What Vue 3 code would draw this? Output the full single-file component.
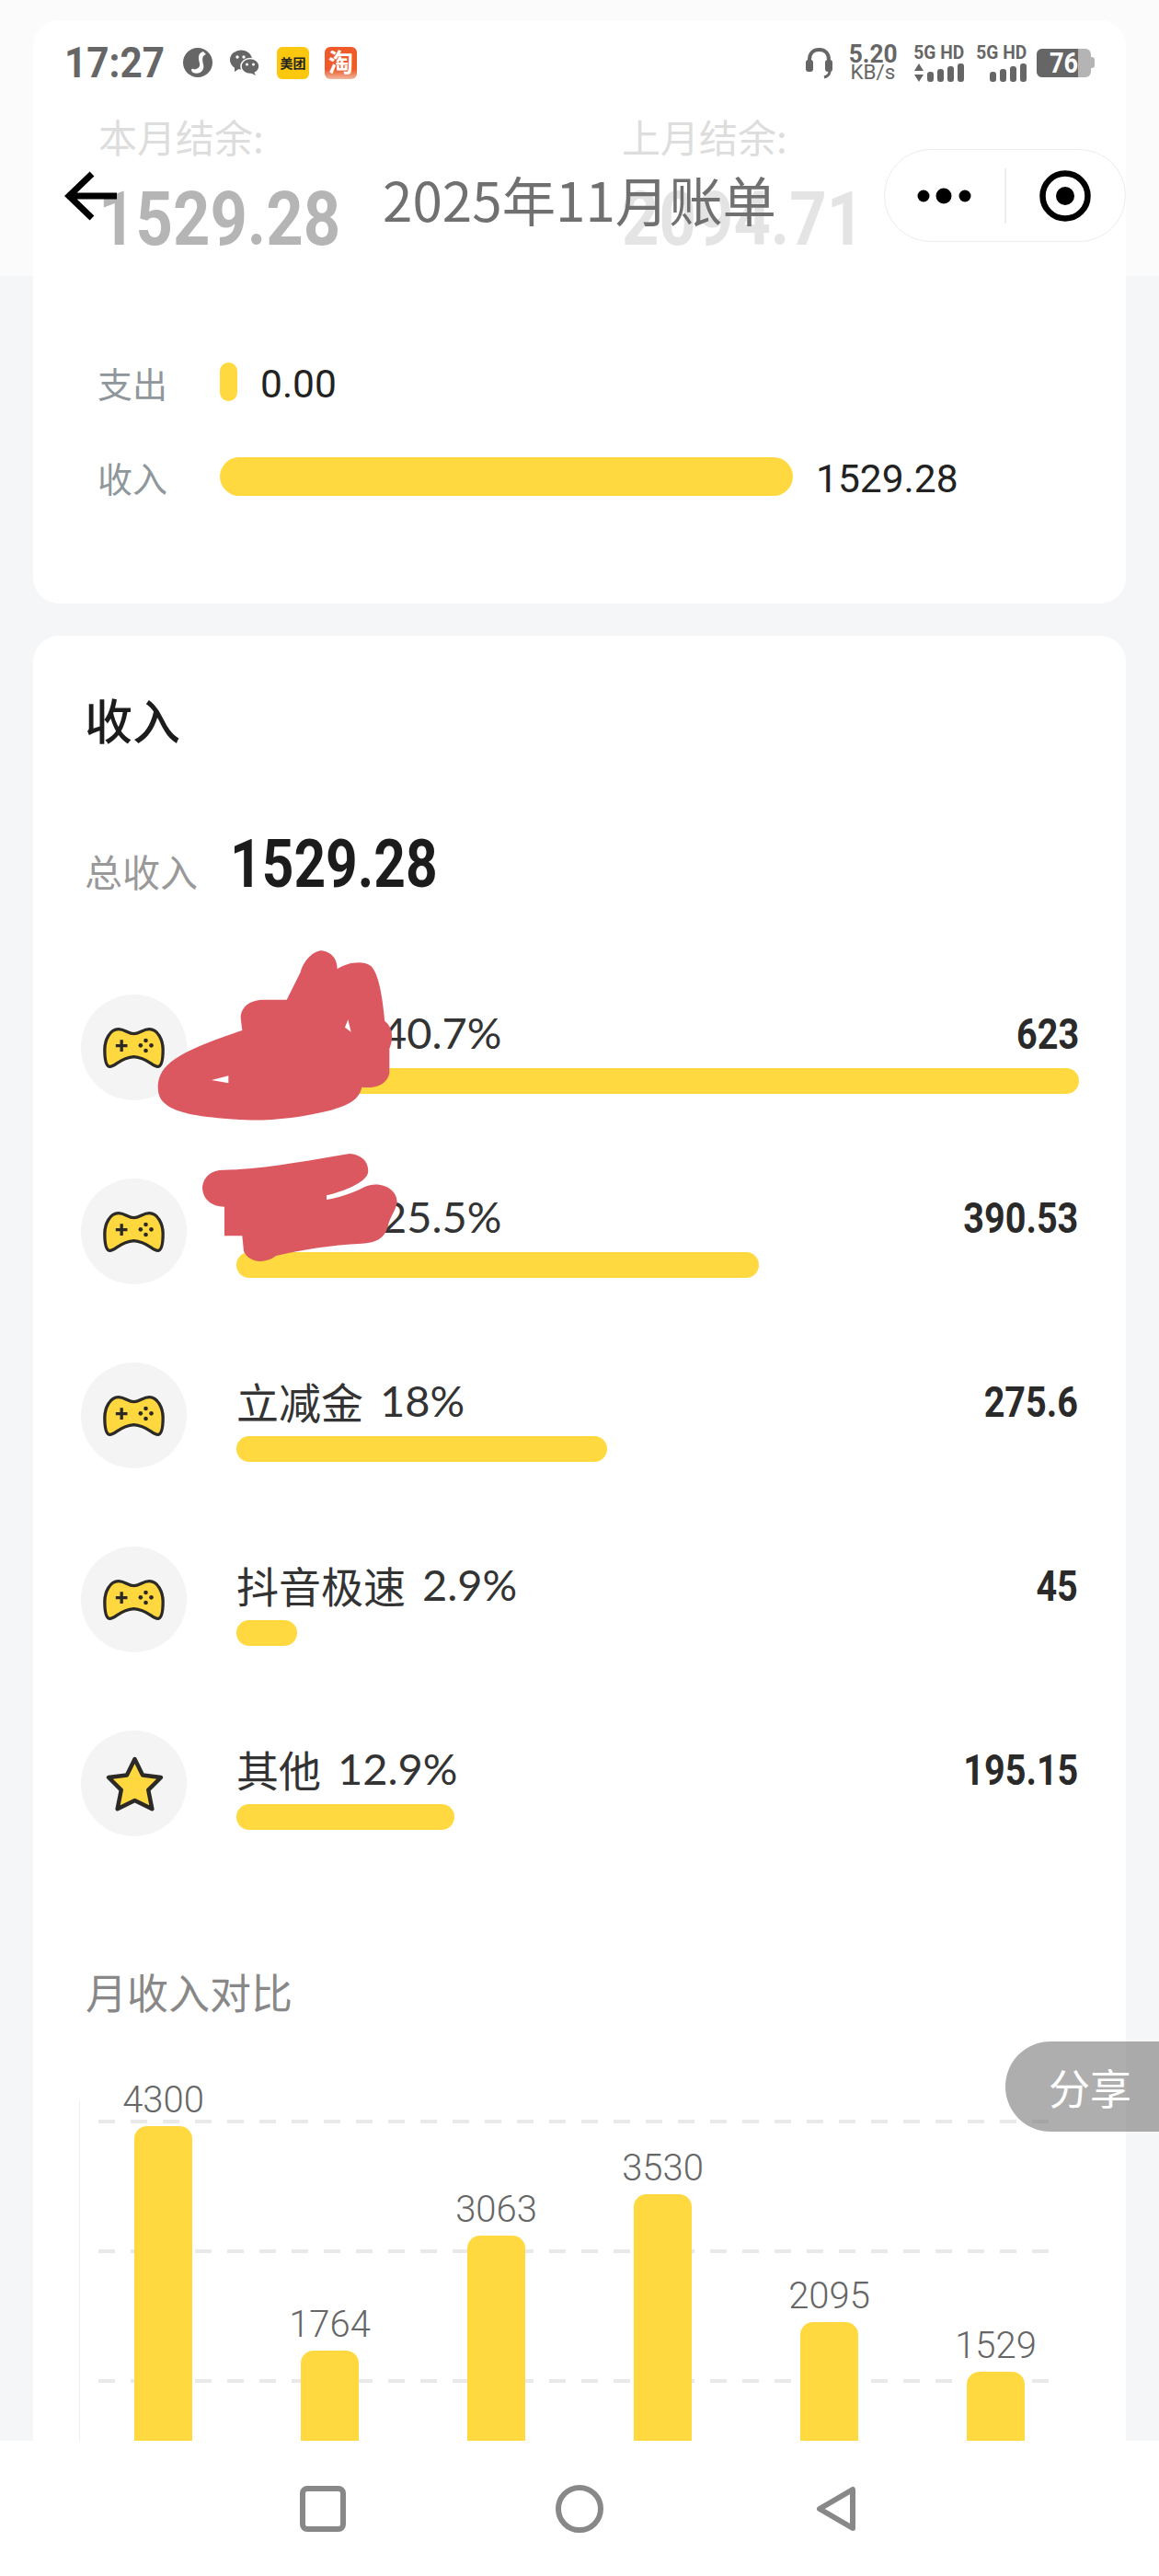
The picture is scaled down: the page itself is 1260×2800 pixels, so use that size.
<script setup>
const rows = [
  { name: '', pct: '40.7%', value: '623', width: 916, icon: 'game' },
  { name: '', pct: '25.5%', value: '390.53', width: 568, icon: 'game' },
  { name: '立减金', pct: '18%', value: '275.6', width: 403, icon: 'game' },
  { name: '抖音极速', pct: '2.9%', value: '45', width: 66, icon: 'game' },
  { name: '其他', pct: '12.9%', value: '195.15', width: 237, icon: 'star' }
]
const bars = [
  { label: '4300', height: 349 },
  { label: '1764', height: 105 },
  { label: '3063', height: 230 },
  { label: '3530', height: 275 },
  { label: '2095', height: 136 },
  { label: '1529', height: 82 }
]
const gridLines = [0, 1, 2]
const signalBars = [11, 14, 17, 20]
</script>

<template>
  <div class="screen">
    <main class="page">
      <section class="card summary">
        <div class="balances">
          <div class="balance">
            <div class="balance-label">本月结余:</div>
            <div class="balance-num strong">1529.28</div>
          </div>
          <div class="balance">
            <div class="balance-label">上月结余:</div>
            <div class="balance-num faint">2094.71</div>
          </div>
        </div>
        <div class="compare first">
          <span class="compare-label">支出</span>
          <span class="compare-bar" style="width: 19px"></span>
          <span class="compare-val">0.00</span>
        </div>
        <div class="compare">
          <span class="compare-label">收入</span>
          <span class="compare-bar" style="width: 623px"></span>
          <span class="compare-val">1529.28</span>
        </div>
      </section>

      <section class="card income">
        <h2 class="income-title">收入</h2>
        <div class="total">
          <span class="total-label">总收入</span>
          <span class="total-num">1529.28</span>
        </div>
        <div class="rows">
          <div v-for="(r, i) in rows" :key="i" class="row">
            <div class="circle">
              <svg v-if="r.icon === 'game'" class="game" viewBox="0 0 200 132">
                <path d="M50 5C70 5 82 20 100 20C118 20 130 5 150 5C178 5 195 40 195 72C195 105 190 127 178 127C160 127 145 98 100 95C55 98 40 127 22 127C10 127 5 105 5 72C5 40 22 5 50 5Z" fill="#ffd840" stroke="#2c2a26" stroke-width="10" stroke-linejoin="round" />
                <path d="M60 40V78M41 59H79" stroke="#2c2a26" stroke-width="10" fill="none" />
                <circle cx="122" cy="58" r="7" fill="#2c2a26" />
                <circle cx="139" cy="42" r="7" fill="#2c2a26" />
                <circle cx="157" cy="58" r="7" fill="#2c2a26" />
                <circle cx="139" cy="75" r="7" fill="#2c2a26" />
              </svg>
              <svg v-else class="star" viewBox="0 0 182 175">
                <path d="M91 9L116 60L174 67L134 107L146 167L91 140L36 167L48 107L8 67L66 60Z" fill="#ffd840" stroke="#2c2a26" stroke-width="13" stroke-linejoin="round" />
              </svg>
            </div>
            <div class="info">
              <div class="info-top">
                <span class="info-name">
                  <span v-if="r.name" class="name-text">{{ r.name }}</span>
                  <span v-else class="name-hidden"></span>
                  <span class="pct">{{ r.pct }}</span>
                </span>
                <span class="info-val">{{ r.value }}</span>
              </div>
              <div class="info-bar" :style="{ width: r.width + 'px' }"></div>
            </div>
          </div>
        </div>
        <div class="chart-title">月收入对比</div>
        <div class="chart">
          <div class="grid-lines">
            <div v-for="g in gridLines" :key="g" class="grid-line"></div>
          </div>
          <div v-for="b in bars" :key="b.label" class="col">
            <span class="col-label">{{ b.label }}</span>
            <div class="col-bar" :style="{ height: b.height + 'px' }"></div>
          </div>
        </div>
      </section>
    </main>

    <svg class="scribble" viewBox="0 0 1200 1200">
      <path fill-rule="evenodd" fill="#dc5860" d="M335 540C340 470 400 430 610 360L605 320C605 280 640 260 680 260L755 260L800 170C815 120 850 100 870 100C905 105 920 130 920 160C950 140 1000 130 1030 150C1060 180 1070 280 1075 330C1100 350 1105 380 1090 420L1090 500C1080 540 1040 550 1000 545C990 590 950 605 900 620C800 645 700 655 620 652C500 645 400 635 360 600C340 585 335 565 335 540ZM510 522L565 508L565 532ZM945 350L955 325L965 365Z" />
      <path fill="#dc5860" d="M480 870C485 835 510 815 550 815C650 815 800 790 960 762C1000 765 1025 790 1020 825C1015 850 960 880 885 898L885 912C930 905 970 890 1010 870C1050 850 1115 870 1115 920C1110 950 1090 970 1085 1000C1075 1040 1040 1055 1000 1055C900 1060 800 1075 720 1095C680 1125 630 1115 615 1080L610 1030L552 1030L552 935C510 935 480 910 480 870Z" />
    </svg>

    <header class="top">
      <div class="status">
        <div class="status-left">
          <span class="time">17:27</span>
          <svg class="st-music" viewBox="0 0 32 32">
            <circle cx="16" cy="16" r="16" fill="#666" />
            <path d="M22 4C15 6 17 12 18 17C19 22 14 24 11 23C9 22 8 25 11 27C18 30 24 24 22 18C21 13 20 9 25 7Z" fill="#fff" />
          </svg>
          <svg class="st-wechat" viewBox="0 0 32 28">
            <ellipse cx="12" cy="11" rx="12" ry="10.5" fill="#666" />
            <path d="M5 18L5 24L11 20Z" fill="#666" />
            <ellipse cx="22" cy="18" rx="10" ry="8.5" fill="#666" stroke="#fff" stroke-width="1.5" />
            <path d="M26 24L28 28L22 25Z" fill="#666" />
            <circle cx="8" cy="8" r="1.7" fill="#fff" />
            <circle cx="15" cy="8" r="1.7" fill="#fff" />
            <circle cx="18.5" cy="16" r="1.5" fill="#fff" />
            <circle cx="25.5" cy="16" r="1.5" fill="#fff" />
          </svg>
          <span class="st-meituan">美团</span>
          <span class="st-taobao">淘</span>
        </div>
        <div class="status-right">
          <svg class="st-head" viewBox="0 0 29 35">
            <path d="M4 20V14C4 7 8 3 14.500 3C21 3 25 7 25 14V20" fill="none" stroke="#666" stroke-width="4" />
            <rect x="0" y="14" width="8" height="13" rx="3" fill="#666" />
            <rect x="21" y="14" width="8" height="13" rx="3" fill="#666" />
            <path d="M26 26C26 30 24 32 20 33" fill="none" stroke="#666" stroke-width="3" />
          </svg>
          <div class="speed">
            <span class="speed-num">5.20</span>
            <span class="speed-unit">KB/s</span>
          </div>
          <div class="net">
            <span class="net-text">5G HD</span>
            <div class="signal">
              <svg class="updown" viewBox="0 0 10 20">
                <path d="M5 0L10 8H0ZM5 20L0 12H10Z" fill="#666" />
              </svg>
              <i v-for="h in signalBars" :key="h" class="sig" :style="{ height: h + 'px' }"></i>
            </div>
          </div>
          <div class="net">
            <span class="net-text">5G HD</span>
            <div class="signal">
              <i v-for="h in signalBars" :key="h" class="sig" :style="{ height: h + 'px' }"></i>
            </div>
          </div>
          <div class="battery">
            <span class="battery-body"><span class="battery-fill"></span><span class="battery-num">76</span></span>
            <span class="battery-nub"></span>
          </div>
        </div>
      </div>
      <div class="nav">
        <svg class="back" viewBox="0 0 57 54">
          <path d="M57 27H5M30 3L5 27L30 51" fill="none" stroke="#000" stroke-width="7" />
        </svg>
        <div class="nav-title">2025年11月账单</div>
        <div class="capsule">
          <div class="capsule-part">
            <svg class="dots" viewBox="0 0 60 18">
              <circle cx="7" cy="9" r="6.500" />
              <circle cx="29" cy="9" r="8.500" />
              <circle cx="52" cy="9" r="6.500" />
            </svg>
          </div>
          <span class="capsule-line"></span>
          <div class="capsule-part">
            <svg class="target" viewBox="0 0 56 56">
              <circle cx="28" cy="28" r="24.500" fill="none" stroke="#000" stroke-width="6.500" />
              <circle cx="28" cy="28" r="10" />
            </svg>
          </div>
        </div>
      </div>
    </header>

    <div class="share"><span>分享</span></div>

    <footer class="softkeys">
      <svg class="key" width="50" height="50" viewBox="0 0 50 50">
        <rect x="3" y="3" width="44" height="44" rx="5" fill="none" stroke="#888" stroke-width="6" />
      </svg>
      <svg class="key" width="52" height="52" viewBox="0 0 52 52">
        <circle cx="26" cy="26" r="23" fill="none" stroke="#888" stroke-width="6" />
      </svg>
      <svg class="key tri" width="46" height="50" viewBox="0 0 46 50">
        <path d="M41 4V46L5 25Z" fill="none" stroke="#888" stroke-width="6" stroke-linejoin="round" />
      </svg>
    </footer>
  </div>
</template>

<style>
html, body { margin: 0; background: #f5f6f8; }
</style>

<style scoped>
.screen {
  position: relative;
  width: 1260px;
  height: 2800px;
  overflow: hidden;
  background: #f5f6f8;
  font-family: "Noto Sans CJK SC", "Noto Sans", sans-serif;
  color: #333;
}
.page { padding: 22px 36px 0; }
.card { background: #fff; border-radius: 28px; }
.summary { height: 634px; padding: 101px 0 0 71px; box-sizing: border-box; }
.balances { display: grid; grid-template-columns: 569px 1fr; }
.balance-label { font-size: 42px; line-height: 50px; color: #aaa; }
.balance-num {
  margin-top: 30px;
  font-family: Roboto, sans-serif;
  font-weight: 700;
  font-size: 82px;
  line-height: 70px;
  transform: scaleX(0.86);
  transform-origin: left center;
}
.strong { color: #464646; }
.faint { color: #bbb; }
.compare { display: flex; align-items: center; height: 42px; margin-top: 61px; }
.compare.first { margin-top: 121px; }
.compare-label { width: 133px; margin-left: -1px; font-size: 38px; color: #8f979c; }
.compare-bar { height: 42px; border-radius: 21px; background: #ffd93f; }
.compare-val { margin: 4px 0 0 25px; font-family: Roboto, sans-serif; font-size: 42.5px; color: #222; }
.income { margin-top: 35px; height: 2200px; padding: 61px 52px 0 52px; box-sizing: border-box; }
.income-title { margin: 0 0 0 4px; font-size: 52px; line-height: 60px; font-weight: 500; color: #1c1c1c; }
.total { display: flex; align-items: baseline; margin: 85px 0 0 4px; height: 70px; }
.total-label { width: 158px; font-size: 41px; color: #999; }
.total-num {
  display: inline-block;
  font-family: Roboto, sans-serif;
  font-weight: 700;
  font-size: 72px;
  color: #1c1c1c;
  transform: scaleX(0.84);
  transform-origin: left center;
}
.rows { margin-top: 114px; display: flex; flex-direction: column; gap: 85px; }
.row { display: flex; gap: 54px; height: 115px; }
.circle {
  width: 115px;
  height: 115px;
  flex: none;
  border-radius: 50%;
  background: #f4f4f5;
  display: flex;
  align-items: center;
  justify-content: center;
}
.game { width: 67px; height: 44px; }
.star { width: 63px; height: 60px; margin-left: 2px; }
.info { flex: 1; padding-top: 13px; }
.info-top { display: flex; justify-content: space-between; align-items: center; height: 56px; }
.info-name { display: flex; align-items: center; font-size: 46px; color: #333; }
.name-text { margin-right: 18px; }
.name-hidden { width: 158px; }
.pct { font-family: Lato, Roboto, sans-serif; font-size: 47px; }
.info-val {
  display: inline-block;
  margin-top: 3px;
  font-family: Roboto, sans-serif;
  font-weight: 700;
  font-size: 46px;
  color: #2a2a2a;
  transform: scaleX(0.86);
  transform-origin: right center;
}
.info-bar { margin-top: 11px; height: 28px; border-radius: 14px; background: #ffd93f; }
.chart-title { margin: 141px 0 0 5px; font-size: 45px; line-height: 56px; color: #888; }
.chart {
  position: relative;
  margin: 91px 0 0 -2px;
  width: 1086px;
  height: 376px;
  border-left: 1px solid #eee;
  display: grid;
  grid-template-columns: repeat(6, 181px);
  grid-template-rows: 376px;
  align-items: end;
}
.grid-lines { position: absolute; left: 20px; top: 20px; width: 1033px; display: flex; flex-direction: column; gap: 137px; }
.grid-line { height: 4px; background: repeating-linear-gradient(90deg, #e9e9e9 0 18px, transparent 18px 35px); }
.col { position: relative; display: flex; flex-direction: column; align-items: center; }
.col-label { font-family: Roboto, sans-serif; font-weight: 300; font-size: 40px; line-height: 40px; color: #666; margin-bottom: 8px; }
.col-bar { width: 63px; border-radius: 14px 14px 0 0; background: #ffd93f; }

.scribble { position: absolute; left: 60px; top: 1000px; width: 400px; height: 400px; }

.top {
  position: absolute;
  left: 0;
  top: 0;
  width: 100%;
  height: 300px;
  background: rgba(255, 255, 255, 0.6);
}
.status {
  display: flex;
  justify-content: space-between;
  height: 40px;
  padding: 48px 70px 0 70px;
  align-items: center;
}
.status-left { display: flex; align-items: center; gap: 20px; }
.time {
  display: block;
  width: 108px;
  white-space: nowrap;
  font-family: Roboto, sans-serif;
  font-weight: 700;
  font-size: 46px;
  color: #666;
  line-height: 40px;
  transform: scaleX(0.92);
  transform-origin: left center;
}
.st-music { width: 32px; height: 32px; margin-left: 1px; }
.st-wechat { width: 32px; height: 28px; margin-left: -1px; }
.st-meituan {
  width: 35px; height: 35px; border-radius: 6px; background: #fbc70f;
  font-size: 14px; font-weight: 700; color: #222; line-height: 35px; text-align: center;
  margin-left: -1px;
}
.st-taobao {
  width: 35px; height: 35px; border-radius: 6px;
  background: linear-gradient(#ee5a2a 70%, #f0b8a0);
  font-size: 27px; font-weight: 700; color: #fff; line-height: 31px; text-align: center;
  margin-left: -3px;
}
.status-right { display: flex; align-items: center; }
.st-head { width: 29px; height: 35px; margin-right: 17px; }
.speed { display: flex; flex-direction: column; align-items: center; width: 54px; margin-right: 15px; font-family: Roboto, sans-serif; color: #666; }
.speed-num { font-size: 28px; line-height: 22px; font-weight: 700; transform: scaleX(0.94); }
.speed-unit { font-size: 22px; line-height: 18px; transform: scaleX(1.02); }
.net { display: flex; flex-direction: column; width: 57px; margin-right: 11px; align-items: flex-end; }
.net-text { display: block; font-family: Roboto, sans-serif; font-weight: 700; font-size: 20px; line-height: 20px; color: #666; white-space: nowrap; transform: scaleX(0.96); transform-origin: right center; }
.signal { display: flex; align-items: flex-end; gap: 4px; height: 20px; margin-top: 2px; }
.updown { width: 10px; height: 20px; }
.sig { display: block; width: 7px; border-radius: 3px; background: #666; }
.battery { display: flex; align-items: center; }
.battery-body {
  position: relative;
  display: block;
  width: 59px;
  height: 31px;
  border-radius: 6px;
  background: #b4b4b4;
}
.battery-fill { position: absolute; left: 0; top: 0; width: 45px; height: 31px; border-radius: 6px 0 0 6px; background: #666; }
.battery-num {
  position: absolute; left: 14px; top: 0;
  font-family: Roboto, sans-serif; font-weight: 700;
  font-size: 32px; line-height: 31px; color: #fff;
  transform: scaleX(0.85);
  transform-origin: left center;
}
.battery-nub { width: 4px; height: 12px; background: #b4b4b4; border-radius: 0 3px 3px 0; }
.nav {
  position: relative;
  display: flex;
  align-items: center;
  height: 101px;
  margin-top: 74px;
  padding: 0 36px 0 70px;
}
.back { width: 57px; height: 54px; flex: none; }
.nav-title {
  margin: 6px 0 0 289px;
  font-size: 58.4px;
  line-height: 70px;
  color: #707070;
  white-space: nowrap;
}
.capsule {
  position: absolute;
  right: 36px;
  top: 0;
  width: 263px;
  height: 101px;
  box-sizing: border-box;
  border: 1px solid #ececec;
  border-radius: 51px;
  background: rgba(255, 255, 255, 0.7);
  display: flex;
  align-items: center;
}
.capsule-part { flex: 1; display: flex; justify-content: center; align-items: center; }
.capsule-line { width: 2px; height: 60px; background: #eee; }
.dots { width: 60px; height: 18px; }
.target { width: 56px; height: 56px; }
.share {
  position: absolute;
  right: 0;
  top: 2219px;
  width: 167px;
  height: 98px;
  border-radius: 50px 0 0 50px;
  background: rgba(120, 120, 120, 0.6);
  display: flex;
  align-items: center;
  padding-left: 47px;
  box-sizing: border-box;
  font-size: 45px;
  color: #fff;
}
.softkeys {
  position: absolute;
  left: 0;
  top: 2653px;
  width: 100%;
  height: 147px;
  background: #fff;
  display: flex;
  align-items: center;
  box-sizing: border-box;
  padding: 0 0 0 326px;
  gap: 228px;
}
.tri { margin-left: 2px; }
</style>
